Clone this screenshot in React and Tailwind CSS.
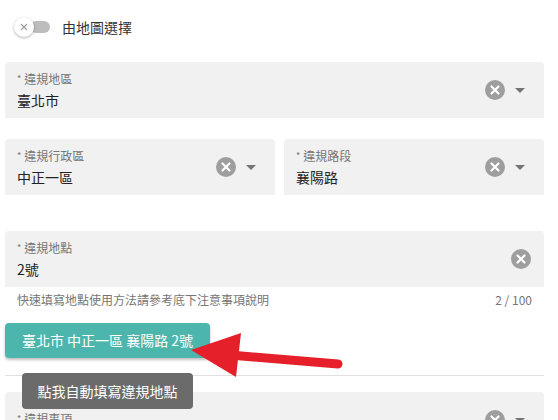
import React from "react";

const font = { fontFamily: '"Noto Sans CJK TC", "Noto Sans", sans-serif' };

function ClearIcon() {
  return (
    <svg width="20" height="20" viewBox="0 0 20 20" className="shrink-0">
      <circle cx="10" cy="10" r="10" fill="#9e9e9e" />
      <path d="M6.5 6.5 L13.5 13.5 M13.5 6.5 L6.5 13.5" stroke="#fff" strokeWidth="2.2" strokeLinecap="round" />
    </svg>
  );
}

function Chevron() {
  return (
    <svg width="10" height="5" viewBox="0 0 10 5" className="shrink-0">
      <path d="M0 0 L10 0 L5 5 Z" fill="#757575" />
    </svg>
  );
}

function Field({ label, value, select = true, className = "" }) {
  return (
    <div className={`h-[56px] bg-[#f1f1f1] rounded-t-[4px] flex items-center pl-[12px] ${select ? "pr-[19px]" : "pr-[13px]"} ${className}`}>
      <div className="flex-1 flex flex-col min-w-0">
        <div className="text-[12px] leading-[16px] text-[#757575]">
          <span className="text-[9px] align-top mr-[3px]">*</span>
          {label}
        </div>
        <div className="text-[14px] leading-[20px] text-[#212121] mt-[3px]">{value}</div>
      </div>
      <div className="flex items-center gap-[10px]">
        <ClearIcon />
        {select && <Chevron />}
      </div>
    </div>
  );
}

export default function App() {
  return (
    <div className="relative w-[558px] h-[420px] overflow-hidden bg-white" style={font}>
      <div className="pl-[14px] pt-[17px] flex items-center h-[37px]">
        <div className="relative w-[36px] h-[20px] flex items-center">
          <div className="absolute left-[16px] w-[20px] h-[12px] rounded-full bg-[#bdbdbd]" />
          <div className="absolute left-0 w-[20px] h-[20px] rounded-full bg-white shadow-[0_1px_3px_rgba(0,0,0,0.3)] flex items-center justify-center">
            <svg width="8" height="8" viewBox="0 0 8 8">
              <path d="M1 1 L7 7 M7 1 L1 7" stroke="#9e9e9e" strokeWidth="1.2" />
            </svg>
          </div>
        </div>
        <span className="ml-[12px] text-[14px] text-[#333]">由地圖選擇</span>
      </div>

      <div className="pl-[5px] w-[544px]">
        <Field label="違規地區" value="臺北市" className="mt-[25px]" />

        <div className="flex gap-[9px] mt-[21px]">
          <Field label="違規行政區" value="中正一區" className="w-[270px]" />
          <Field label="違規路段" value="襄陽路" className="w-[260px]" />
        </div>

        <Field label="違規地點" value="2號" select={false} className="mt-[36px]" />

        <div className="mt-[5px] flex justify-between px-[12px] text-[12px] leading-[16px] text-[#757575]">
          <span>快速填寫地點使用方法請參考底下注意事項說明</span>
          <span>2 / 100</span>
        </div>

        <button className="mt-[15px] h-[35px] w-[205px] rounded-[4px] bg-[#4db6ac] text-white text-[14px] shadow-[0_2px_3px_rgba(0,0,0,0.25)] flex items-center justify-center">
          臺北市 中正一區 襄陽路 2號
        </button>

        <div className="mt-[17px] h-px bg-[#e0e0e0]" />

        <Field label="違規事項" value="" className="mt-[16px]" />
      </div>

      <svg className="absolute left-0 top-0 pointer-events-none" width="558" height="420">
        <line x1="230" y1="355" x2="338" y2="364" stroke="#e5202a" strokeWidth="9" strokeLinecap="round" />
        <polygon points="191,350 241,333 236,377" fill="#e5202a" />
      </svg>

      <div className="absolute left-[22px] top-[373px] w-[171px] h-[36px] rounded-[4px] bg-[#6b6b6b] text-white text-[14px] flex items-center justify-center">
        點我自動填寫違規地點
      </div>
    </div>
  );
}
